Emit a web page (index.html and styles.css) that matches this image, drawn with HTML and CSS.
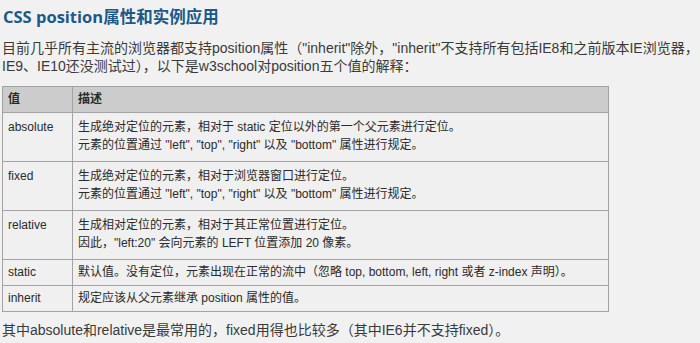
FILE: index.html
```html
<!DOCTYPE html>
<html lang="zh-CN">
<head>
<meta charset="utf-8">
<title>CSS position属性和实例应用</title>
<link rel="stylesheet" href="styles.css">
</head>
<body>
<div class="page">
  <h2 class="title">CSS position属性和实例应用</h2>
  <p class="para">目前几乎所有主流的浏览器都支持position属性（"inherit"除外，"inherit"不支持所有包括IE8和之前版本IE浏览器，<br>IE9、IE10还没测试过），以下是w3school对position五个值的解释：</p>
  <table class="ref">
    <thead>
      <tr><th class="c1">值</th><th>描述</th></tr>
    </thead>
    <tbody>
      <tr class="multi"><td>absolute</td><td>生成绝对定位的元素，相对于 static 定位以外的第一个父元素进行定位。<br>元素的位置通过 "left", "top", "right" 以及 "bottom" 属性进行规定。</td></tr>
      <tr class="multi"><td>fixed</td><td>生成绝对定位的元素，相对于浏览器窗口进行定位。<br>元素的位置通过 "left", "top", "right" 以及 "bottom" 属性进行规定。</td></tr>
      <tr class="multi"><td>relative</td><td>生成相对定位的元素，相对于其正常位置进行定位。<br>因此，"left:20" 会向元素的 LEFT 位置添加 20 像素。</td></tr>
      <tr><td>static</td><td>默认值。没有定位，元素出现在正常的流中（忽略 top, bottom, left, right 或者 z-index 声明）。</td></tr>
      <tr><td>inherit</td><td>规定应该从父元素继承 position 属性的值。</td></tr>
    </tbody>
  </table>
  <p class="para last">其中absolute和relative是最常用的，fixed用得也比较多（其中IE6并不支持fixed）。</p>
</div>
</body>
</html>
```

FILE: styles.css
```css
html, body {
  margin: 0;
  padding: 0;
  background: #f1f1f1;
}
.page {
  padding: 5px 2px 0 2px;
  font-family: "Liberation Sans", "Noto Sans CJK SC", sans-serif;
  color: #333;
}
.title {
  margin: 0 0 0 1px;
  font-family: "Open Sans", "Noto Sans CJK SC", sans-serif;
  font-weight: bold;
  font-size: 16.5px;
  line-height: 24px;
  color: #1b5a88;
}
.para {
  margin: 10px 0 0 0;
  font-size: 14px;
  line-height: 18px;
  color: #3a3a3a;
  white-space: nowrap;
}
.para.last {
  margin-top: 9px;
}
.ref {
  margin-top: 11px;
  width: 607px;
  border-collapse: collapse;
  font-size: 12px;
  line-height: 17px;
  color: #2a2a2a;
}
.ref th, .ref td {
  border: 1px solid #a3a3a3;
  padding: 4px 5px;
  text-align: left;
  vertical-align: top;
}
.ref th {
  background: #cccccc;
  font-weight: bold;
}
.ref td {
  background: #f0f0f0;
}
.ref .c1 {
  width: 59px;
}
.ref .multi td {
  padding-top: 5px;
  padding-bottom: 7px;
  line-height: 18px;
}
```
